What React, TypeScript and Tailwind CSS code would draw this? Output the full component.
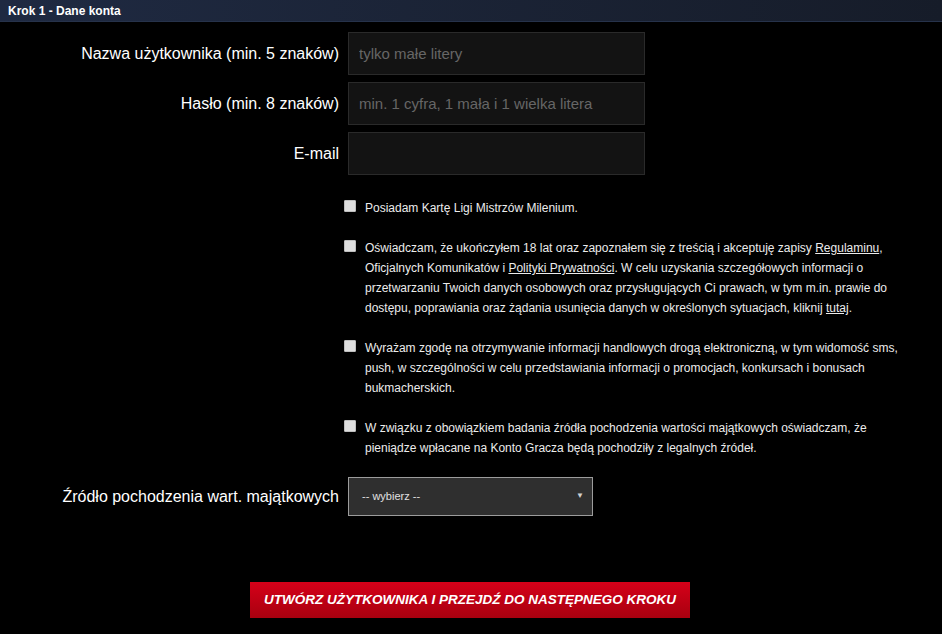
import React from "react";

const font = { fontFamily: '"Liberation Sans", Arial, sans-serif' };

const Field: React.FC<{ label: string; placeholder?: string }> = ({ label, placeholder }) => (
  <div className="flex items-center">
    <label className="w-[348px] shrink-0 pr-[9px] text-right text-[16px] text-white">{label}</label>
    <input
      type="text"
      placeholder={placeholder}
      className="h-[43px] w-[297px] border border-[#2a2a2a] bg-[#131313] px-[10px] text-[15px] text-white outline-none placeholder:text-[#666]"
    />
  </div>
);

const Check: React.FC<{ children: React.ReactNode }> = ({ children }) => (
  <div className="flex items-start">
    <span className="mt-[2px] ml-[344px] h-[12px] w-[12px] shrink-0 rounded-[1px] border border-[#bdbdbd] bg-[#dedede]" />
    <p className="ml-[9px] w-[575px] text-[12px] leading-[20px] text-[#ececec]">{children}</p>
  </div>
);

export default function App() {
  return (
    <div className="min-h-[634px] bg-black" style={font}>
      <div className="flex h-[22px] items-center border-b border-[#26324a] bg-gradient-to-r from-[#1f2a42] to-[#161c29] px-[8px]">
        <span className="text-[12px] font-bold text-white">Krok 1 - Dane konta</span>
      </div>

      <div className="mt-[10px] flex flex-col gap-[7px]">
        <Field label="Nazwa użytkownika (min. 5 znaków)" placeholder="tylko małe litery" />
        <Field label="Hasło (min. 8 znaków)" placeholder="min. 1 cyfra, 1 mała i 1 wielka litera" />
        <Field label="E-mail" />
      </div>

      <div className="mt-[23px] flex flex-col gap-[20px]">
        <Check>Posiadam Kartę Ligi Mistrzów Milenium.</Check>
        <Check>
          Oświadczam, że ukończyłem 18 lat oraz zapoznałem się z treścią i akceptuję zapisy{" "}
          <span className="underline">Regulaminu</span>,<br />
          Oficjalnych Komunikatów i <span className="underline">Polityki Prywatności</span>. W celu uzyskania
          szczegółowych informacji o<br />
          przetwarzaniu Twoich danych osobowych oraz przysługujących Ci prawach, w tym m.in. prawie do
          <br />
          dostępu, poprawiania oraz żądania usunięcia danych w określonych sytuacjach, kliknij{" "}
          <span className="underline">tutaj</span>.
        </Check>
        <Check>
          Wyrażam zgodę na otrzymywanie informacji handlowych drogą elektroniczną, w tym widomość sms,
          <br />
          push, w szczególności w celu przedstawiania informacji o promocjach, konkursach i bonusach
          <br />
          bukmacherskich.
        </Check>
        <Check>
          W związku z obowiązkiem badania źródła pochodzenia wartości majątkowych oświadczam, że
          <br />
          pieniądze wpłacane na Konto Gracza będą pochodziły z legalnych źródeł.
        </Check>
      </div>

      <div className="mt-[19px] flex items-center">
        <label className="w-[348px] shrink-0 pr-[9px] text-right text-[16px] text-white">
          Źródło pochodzenia wart. majątkowych
        </label>
        <div className="relative flex h-[39px] w-[245px] items-center border border-[#9c9c9c] bg-[#2f2f2f] px-[13px]">
          <span className="text-[11px] text-[#e0e0e0]">-- wybierz --</span>
          <span className="absolute right-[8px] top-[12px] text-[8px] text-[#d0d0d0]">▼</span>
        </div>
      </div>

      <div className="mt-[66px] flex justify-center pr-[2px]">
        <button className="h-[36px] w-[440px] bg-gradient-to-b from-[#d60019] to-[#a8000f] text-[13.5px] font-bold italic uppercase text-white">
          Utwórz użytkownika i przejdź do następnego kroku
        </button>
      </div>
    </div>
  );
}
